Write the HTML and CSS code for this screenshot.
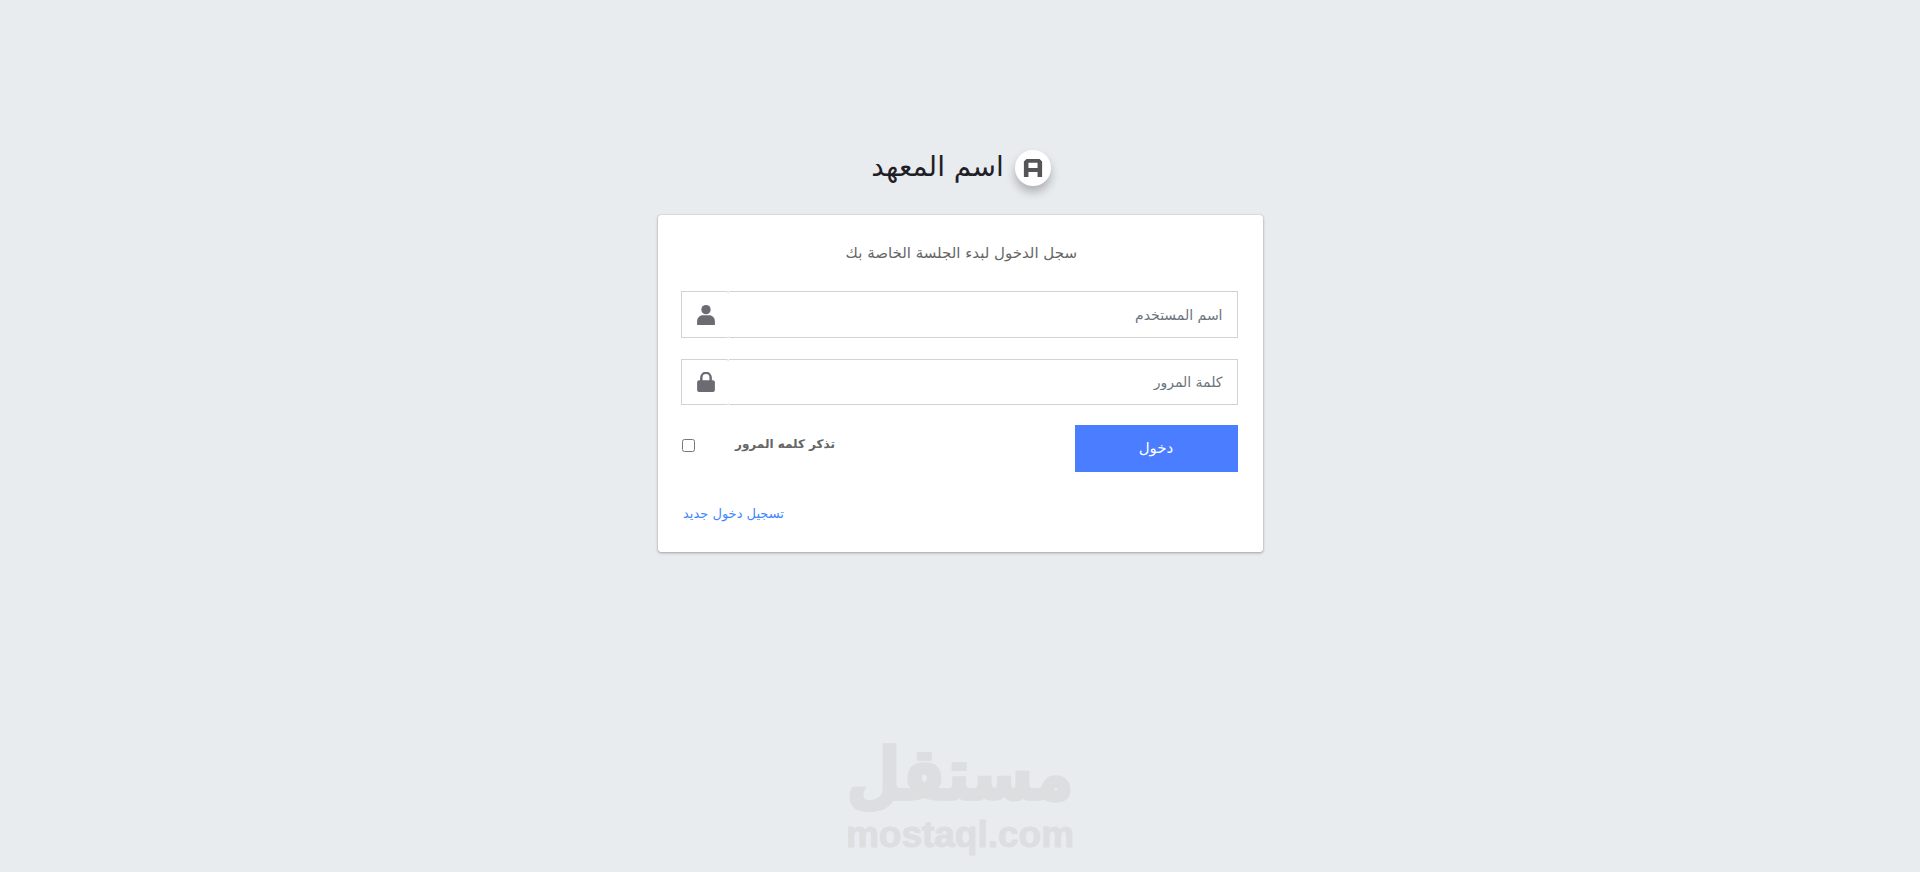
FILE: index.html
```html
<!DOCTYPE html>
<html lang="ar" dir="rtl">
<head>
    <meta charset="UTF-8">
    <meta name="viewport" content="width=device-width, initial-scale=1.0">
    <title>اسم المعهد</title>
    <link rel="stylesheet" href="styles.css">
</head>
<body>
    <div class="login-box">
        <!-- الشعار -->
        <div class="login-logo">
            <span class="brand-image">
                <svg width="26" height="26" viewBox="0 0 20 20">
                    <path d="M3 17V5L5 3h10l2 2v12h-3.500v-4h-7v4zM6.500 6v4h7V6z" fill="#555558"/>
                </svg>
            </span>
            <span class="brand-text">اسم المعهد</span>
        </div>

        <div class="card">
            <p class="login-msg">سجل الدخول لبدء الجلسة الخاصة بك</p>
            <form>
                <div class="input-group">
                    <input type="text" placeholder="اسم المستخدم">
                    <span class="input-icon">
                        <svg width="18" height="20" viewBox="0 0 16 18">
                            <circle cx="8" cy="4.200" r="4.200" fill="#6b6b72"/>
                            <path d="M0 18v-3.200C0 11.500 2.500 9.300 5 9.300h6c2.500 0 5 2.200 5 5.500V18z" fill="#6b6b72"/>
                        </svg>
                    </span>
                </div>
                <div class="input-group">
                    <input type="password" placeholder="كلمة المرور">
                    <span class="input-icon">
                        <svg width="18" height="20" viewBox="0 0 16 18">
                            <path d="M3.800 8V5a4.200 4.200 0 0 1 8.400 0v3" fill="none" stroke="#6b6b72" stroke-width="2.200"/>
                            <rect x="0" y="7.500" width="16" height="10.500" rx="1.800" fill="#6b6b72"/>
                        </svg>
                    </span>
                </div>
                <div class="form-row">
                    <button type="button" class="btn-login">دخول</button>
                    <div class="remember">
                        <label for="remember">تذكر كلمه المرور</label>
                        <input type="checkbox" id="remember">
                    </div>
                </div>
            </form>
            <a class="register-link" href="#">تسجيل دخول جديد</a>
        </div>
    </div>

    <!-- علامة مستقل المائية -->
    <div class="watermark">
        <span class="watermark-ar">مستقل</span>
        <span class="watermark-en" dir="ltr">mostaql.com</span>
    </div>
</body>
</html>
```

FILE: styles.css
```css
* {
    box-sizing: border-box;
}
html, body {
    height: 100%;
}
body {
    margin: 0;
    background-color: #e9ecef;
    font-family: "DejaVu Sans", "Liberation Sans", sans-serif;
    font-size: 14px;
    color: #6c757d;
    overflow: hidden;
}
.login-box {
    width: 605px;
    margin: 0 auto;
    padding-top: 146px;
}
.login-logo {
    display: flex;
    justify-content: center;
    align-items: center;
    gap: 11px;
    height: 44px;
    margin-bottom: 25px;
    padding-left: 3px;
    color: #1f2026;
    font-size: 28px;
}
.brand-image {
    display: flex;
    justify-content: center;
    align-items: center;
    width: 36px;
    height: 36px;
    margin-right: 1px;
    border-radius: 50%;
    background-color: #fff;
    box-shadow: 0 6px 10px rgba(0, 0, 0, 0.25);
}
.brand-text {
    padding-bottom: 4px;
}
.card {
    height: 337px;
    padding: 26px 25px 0 23.5px;
    background-color: #fff;
    border-radius: 3px;
    box-shadow: 0 0 1px rgba(0, 0, 0, 0.3), 0 1px 3px rgba(0, 0, 0, 0.3);
}
.login-msg {
    margin: 0 0 27px;
    padding: 1px 0 0 4px;
    text-align: center;
    line-height: 22px;
    font-size: 15px;
    color: #666;
}
.input-group {
    display: flex;
    height: 47px;
    margin-bottom: 21px;
}
.input-group + .input-group {
    height: 46px;
    margin-bottom: 20px;
}
.input-group input {
    flex: 1;
    min-width: 0;
    height: 100%;
    padding: 0 14px;
    border: 1px solid #ced4da;
    border-left: 0;
    outline: none;
    font-family: inherit;
    font-size: 14px;
}
.input-group input::placeholder {
    color: #6c757d;
}
.input-icon {
    display: flex;
    justify-content: center;
    align-items: center;
    width: 48px;
    border: 1px solid #ced4da;
    border-right: 0;
    border-radius: 0 3px 3px 0;
}
.form-row {
    display: flex;
    align-items: flex-start;
    justify-content: space-between;
}
.btn-login {
    width: 163px;
    height: 47px;
    padding-bottom: 3px;
    border: 0;
    background-color: #4a7dff;
    color: #fff;
    font-family: inherit;
    font-size: 15px;
}
.remember {
    display: flex;
    align-items: flex-start;
    gap: 40px;
    padding-top: 12px;
}
.remember label {
    font-size: 12px;
    font-weight: bold;
    color: #666;
}
.remember input {
    width: 13px;
    height: 13px;
    margin: 2px 0 0 1px;
}
.register-link {
    display: block;
    margin: 34px 0 0 2px;
    text-align: left;
    font-size: 13px;
    color: #3f86ff;
    text-decoration: none;
}
.watermark {
    position: absolute;
    left: 0;
    right: 0;
    bottom: 20px;
    display: flex;
    flex-direction: column;
    align-items: center;
    gap: 2px;
    color: #dcdee0;
    font-weight: bold;
}
.watermark-ar {
    font-size: 62px;
    line-height: 72px;
    -webkit-text-stroke: 3px #dcdee0;
    transform: scaleY(1.15);
    transform-origin: center bottom;
}
.watermark-en {
    font-family: "Liberation Sans", sans-serif;
    font-size: 37px;
    line-height: 34px;
    -webkit-text-stroke: 1px #dcdee0;
}
```
